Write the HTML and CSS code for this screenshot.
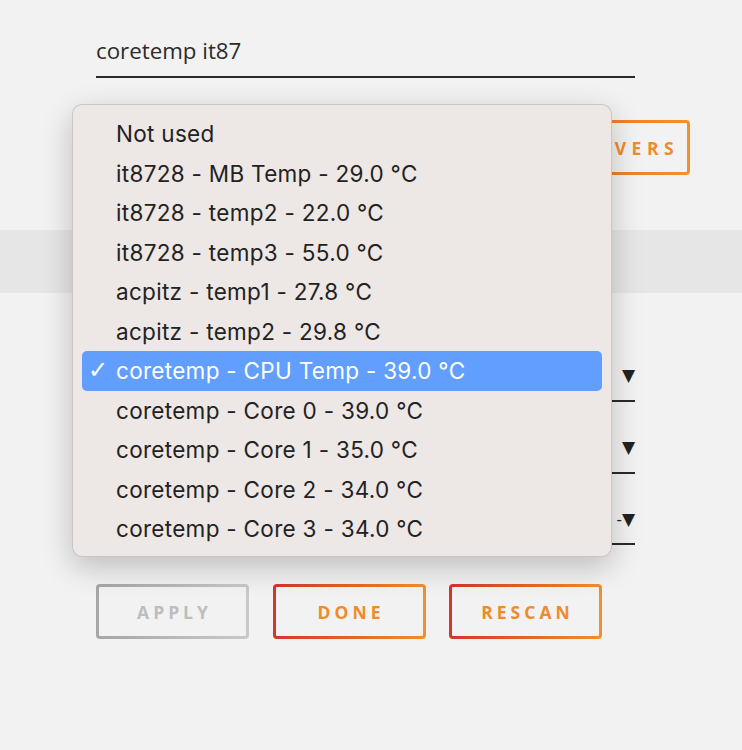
FILE: index.html
```html
<!DOCTYPE html>
<html lang="en">
<head>
    <meta charset="UTF-8">
    <meta name="viewport" content="width=device-width, initial-scale=1.0">
    <title>Sensors</title>
    <link rel="stylesheet" href="styles.css">
</head>
<body>
    <div class="page">
        <div class="field">
            <div class="field-text">coretemp it87</div>
        </div>

        <div class="drivers-row">
            <button class="btn btn-drivers">DRIVERS</button>
        </div>

        <div class="band"></div>

        <div class="selects">
            <div class="select"><span class="arrow">&#9660;</span></div>
            <div class="select"><span class="arrow">&#9660;</span></div>
            <div class="select"><span class="arrow"><span class="dash">-</span>&#9660;</span></div>
        </div>

        <div class="actions">
            <button class="btn btn-disabled">APPLY</button>
            <button class="btn">DONE</button>
            <button class="btn">RESCAN</button>
        </div>

        <!-- open select menu -->
        <ul class="menu">
            <li>Not used</li>
            <li>it8728 - MB Temp - 29.0 °C</li>
            <li>it8728 - temp2 - 22.0 °C</li>
            <li>it8728 - temp3 - 55.0 °C</li>
            <li>acpitz - temp1 - 27.8 °C</li>
            <li>acpitz - temp2 - 29.8 °C</li>
            <li class="selected"><span class="check">&#10003;</span>coretemp - CPU Temp - 39.0 °C</li>
            <li>coretemp - Core 0 - 39.0 °C</li>
            <li>coretemp - Core 1 - 35.0 °C</li>
            <li>coretemp - Core 2 - 34.0 °C</li>
            <li>coretemp - Core 3 - 34.0 °C</li>
        </ul>
    </div>
</body>
</html>
```

FILE: styles.css
```css
body {
    margin: 0;
    background: #f2f2f2;
    font-family: "Open Sans", Arial, sans-serif;
    color: #222;
}
.page {
    position: relative;
    width: 742px;
    height: 750px;
    overflow: hidden;
}
.field {
    margin: 0 107px 0 96px;
    padding-top: 35px;
    height: 41px;
    border-bottom: 2px solid #2a2a2a;
    box-sizing: content-box;
}
.field-text {
    font-size: 22.3px;
    line-height: 32px;
    color: #2b2b2b;
}
.drivers-row {
    display: flex;
    justify-content: flex-end;
    padding: 42px 52px 0 0;
}
.band {
    margin-top: 55px;
    height: 63px;
    background: #e6e6e6;
}
.selects {
    margin: 32px 107px 0 96px;
    display: flex;
    flex-direction: column;
}
.select {
    height: 72px;
    border-bottom: 2px solid #2a2a2a;
    display: flex;
    justify-content: flex-end;
    align-items: flex-end;
    box-sizing: border-box;
    padding-bottom: 16px;
}
.select:nth-child(1) { height: 77px; }
.select:nth-child(3) { height: 71px; padding-bottom: 14px; }
.arrow {
    font-size: 17px;
    color: #222;
    line-height: 18px;
    font-family: "DejaVu Sans", sans-serif;
}
.dash {
    font-size: 15px;
}
.actions {
    display: flex;
    gap: 23.5px;
    margin: 39px 0 0 96px;
}
.btn {
    width: 153px;
    height: 55px;
    border: 3px solid transparent;
    border-radius: 4px;
    background: linear-gradient(#f2f2f2, #f2f2f2) padding-box,
                linear-gradient(90deg, #d3362b, #f0922c) border-box;
    color: #ef8b2b;
    font-family: "Open Sans", Arial, sans-serif;
    font-weight: 700;
    font-size: 17.5px;
    letter-spacing: 4px;
    padding: 0 0 0 4px;
    cursor: pointer;
}
.btn-drivers {
    padding-left: 20px;
    letter-spacing: 5.5px;
    white-space: nowrap;
    background: linear-gradient(#f2f2f2, #f2f2f2) padding-box,
                linear-gradient(90deg, #e5702b, #f0922c) border-box;
}
.btn-disabled {
    background: linear-gradient(#f2f2f2, #f2f2f2) padding-box,
                linear-gradient(90deg, #a6a6a6, #c9c9c9) border-box;
    color: #bdbdbd;
}
.menu {
    position: absolute;
    left: 72px;
    top: 104px;
    width: 540px;
    height: 453px;
    margin: 0;
    padding: 9px 9px 7px;
    box-sizing: border-box;
    list-style: none;
    background: #ede7e5;
    border: 1px solid rgba(0, 0, 0, 0.14);
    border-radius: 10px;
    box-shadow: 0 10px 30px rgba(0, 0, 0, 0.22);
    font-family: Inter, "Open Sans", sans-serif;
    font-size: 22.5px;
    letter-spacing: 0.3px;
    color: #222;
}
.menu li {
    height: 39.5px;
    line-height: 39.5px;
    padding-left: 34px;
    border-radius: 5px;
    position: relative;
}
.menu li.selected {
    background: #619efe;
    color: #fff;
}
.check {
    position: absolute;
    left: 6px;
    top: 0;
    font-size: 24px;
    font-family: "DejaVu Sans", sans-serif;
}
```
